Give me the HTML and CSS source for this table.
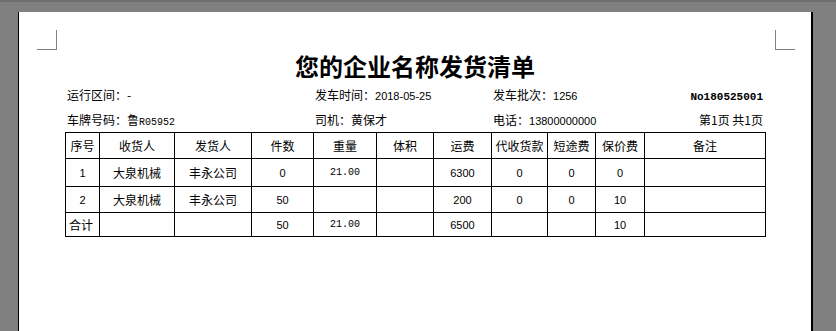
FILE: index.html
```html
<!DOCTYPE html>
<html lang="zh-CN">
<head>
<meta charset="utf-8">
<title>发货清单</title>
<link rel="stylesheet" href="styles.css">
</head>
<body>
<div class="viewer">
  <div class="page">
    <div class="marks">
      <span class="mark mark-left"></span>
      <span class="mark mark-right"></span>
    </div>
    <h1 class="title">您的企业名称发货清单</h1>
    <div class="info">
      <div class="info-cell">运行区间：-</div>
      <div class="info-cell">发车时间：<span class="num">2018-05-25</span></div>
      <div class="info-cell">发车批次：<span class="num">1256</span></div>
      <div class="info-cell right"><span class="serial">No180525001</span></div>
      <div class="info-cell">车牌号码：鲁<span class="mono">R05952</span></div>
      <div class="info-cell">司机：黄保才</div>
      <div class="info-cell">电话：<span class="num">13800000000</span></div>
      <div class="info-cell right">第1页 共1页</div>
    </div>
    <table class="list">
      <colgroup>
        <col class="c1"><col class="c2"><col class="c3"><col class="c4"><col class="c5"><col class="c6">
        <col class="c7"><col class="c8"><col class="c9"><col class="c10"><col class="c11">
      </colgroup>
      <thead>
        <tr class="r-head">
          <th>序号</th><th>收货人</th><th>发货人</th><th>件数</th><th>重量</th><th>体积</th>
          <th>运费</th><th>代收货款</th><th>短途费</th><th>保价费</th><th>备注</th>
        </tr>
      </thead>
      <tbody>
        <tr class="r-1">
          <td class="num">1</td><td>大泉机械</td><td>丰永公司</td><td class="num">0</td><td class="mono">21.00</td><td></td>
          <td class="num">6300</td><td class="num">0</td><td class="num">0</td><td class="num">0</td><td></td>
        </tr>
        <tr class="r-2">
          <td class="num">2</td><td>大泉机械</td><td>丰永公司</td><td class="num">50</td><td></td><td></td>
          <td class="num">200</td><td class="num">0</td><td class="num">0</td><td class="num">10</td><td></td>
        </tr>
        <tr class="r-sum">
          <td class="left">合计</td><td></td><td></td><td class="num">50</td><td class="mono">21.00</td><td></td>
          <td class="num">6500</td><td></td><td></td><td class="num">10</td><td></td>
        </tr>
      </tbody>
    </table>
  </div>
</div>
</body>
</html>
```
FILE: styles.css
```css
html, body {
  margin: 0;
  padding: 0;
  height: 100%;
  overflow: hidden;
}
body {
  background: #808080;
  font-family: "Liberation Sans", "Noto Sans CJK SC", sans-serif;
  font-size: 12px;
  color: #000;
}
.viewer {
  border-top: 2px solid #6e6e6e;
  padding: 10px 23px 0 18px;
  height: 100%;
  box-sizing: border-box;
}
.page {
  background: #fff;
  border-left: 1px solid #000;
  border-right: 2px solid #000;
  width: 792px;
  height: 319px;
}
.marks {
  display: flex;
  justify-content: space-between;
  padding: 18px 16px 0 18px;
}
.mark {
  display: block;
  width: 20px;
  height: 20px;
  box-sizing: border-box;
  border-bottom: 1px solid #808080;
}
.mark-left {
  border-right: 1px solid #808080;
}
.mark-right {
  border-left: 1px solid #808080;
}
.title {
  margin: 1px 0 0 46px;
  width: 700px;
  text-align: center;
  font-family: "Noto Sans CJK SC", sans-serif;
  font-size: 24px;
  font-weight: 700;
  line-height: 30px;
  padding-bottom: 1px;
}
.info {
  margin-left: 46px;
  width: 700px;
  display: grid;
  grid-template-columns: 248px 178px 1fr auto;
  grid-auto-rows: 25px;
  align-items: center;
}
.info-cell {
  padding-left: 2px;
  white-space: nowrap;
  font-family: "Noto Sans CJK SC", sans-serif;
}
.info-cell.right {
  padding-right: 2px;
  text-align: right;
}
.num {
  font-family: "Liberation Sans", sans-serif;
  font-size: 11px;
}
.mono {
  font-family: "Liberation Mono", monospace;
  font-size: 10px;
}
.serial {
  font-family: "Liberation Mono", monospace;
  font-weight: 700;
  font-size: 11px;
}
.list {
  margin-left: 46px;
  border-collapse: collapse;
  table-layout: fixed;
  width: 700px;
}
.list th, .list td {
  border: 1px solid #000;
  padding: 0;
  text-align: center;
  font-weight: 400;
  font-family: "Noto Sans CJK SC", sans-serif;
  font-size: 12px;
  white-space: nowrap;
  overflow: hidden;
}
.list td.num {
  font-family: "Liberation Sans", sans-serif;
  font-size: 11px;
}
.list td.mono {
  font-family: "Liberation Mono", monospace;
  font-size: 10px;
}
.list td.left {
  text-align: left;
  padding-left: 3px;
}
.r-head { height: 26px; }
.r-1 { height: 28px; }
.r-2 { height: 26px; }
.r-sum { height: 24px; }
.c1 { width: 34px; }
.c2 { width: 75px; }
.c3 { width: 77px; }
.c4 { width: 62px; }
.c5 { width: 63px; }
.c6 { width: 57px; }
.c7 { width: 58px; }
.c8 { width: 56px; }
.c9 { width: 48px; }
.c10 { width: 49px; }
.c11 { width: 121px; }
```
